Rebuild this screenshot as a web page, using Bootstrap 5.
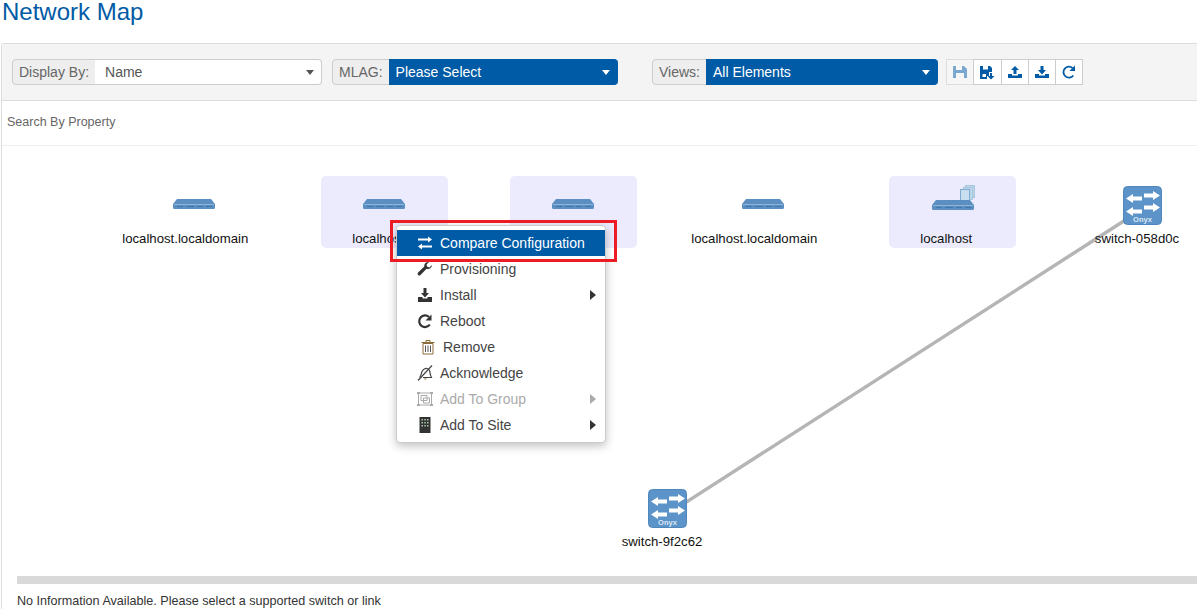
<!DOCTYPE html>
<html lang="en">
<head>
  <meta charset="UTF-8">
  <meta name="viewport" content="width=device-width, initial-scale=1.0">
  <title>Network Map</title>
  <link href="https://cdn.jsdelivr.net/npm/bootstrap@5.3.2/dist/css/bootstrap.min.css" rel="stylesheet">
  <style>
    html, body { height: 615px; overflow: hidden; }
    body { background: #fff; font-family: "Liberation Sans", Arial, sans-serif; font-size: 14px; color: #333; }
    .page-title { font-size: 24px; line-height: 23px; font-weight: 400; color: #005ba6; margin: 0 0 20px 2px; }
    .map-panel { margin-left: 1px; border-left: 1px solid #ddd; border-top: 1px solid #ddd; border-top-left-radius: 3px; }
    .tool-row { height: 57px; background: #f4f4f4; border-bottom: 1px solid #ddd; padding: 15px 0 0 10px; }
    .tool-row .input-group { flex-wrap: nowrap; height: 26px; }
    .tool-row .input-group-text { height: 26px; padding: 0 6px; font-size: 14px; color: #666; background: #eee; border-color: #ccc; border-radius: 4px 0 0 4px; }
    .pick { flex: 1; height: 26px; line-height: 24px; padding: 0 7px; font-size: 14px; position: relative; border: 1px solid #ccc; border-left: 0; border-radius: 0 4px 4px 0; }
    .pick::after { content: ""; position: absolute; right: 7px; top: 10px; border: 4px solid transparent; border-top: 5px solid #555; border-bottom: 0; }
    .pick-blue { background: #005ba6; border-color: #005ba6; color: #fff; }
    .pick-blue::after { border-top-color: #fff; }
    .pick-white { background: #fff; color: #555; padding-left: 10px; }
    .w-display { width: 310px; margin-right: 10px; }
    .w-mlag { width: 286px; margin-right: 34px; }
    .w-views { width: 286px; margin-right: 8px; }
    .tool-btn { width: 28.3px; height: 26px; padding: 0; margin-left: -1px; background: #fff; border: 1px solid #ccc; border-radius: 0; color: #005ba6; display: flex; align-items: center; justify-content: center; }
    .tool-btn:first-child { margin-left: 0; background: #f6f6f6; color: #7ba8d0; border-color: #ddd; }
    .search-row { height: 45px; border-bottom: 1px solid #eee; padding-left: 5px; line-height: 43px; font-size: 12.5px; color: #666; }
    .canvas { position: relative; height: 430px; }
    .node { position: absolute; top: 30px; width: 126.5px; height: 72px; border-radius: 5px; text-align: center; color: #111; font-size: 13.2px; }
    .node svg { position: absolute; left: 41px; top: 22px; }
    .node svg.stack-icon { left: 42px; top: 7px; }
    .node span { position: absolute; left: -26px; right: -14px; top: 54px; line-height: 17px; }
    .node-off span { left: -29px; right: -11px; }
    .node-on { background: #ebebfd; }
    .switch { position: absolute; width: 100px; text-align: center; font-size: 13.2px; line-height: 17px; color: #111; }
    .switch svg { display: block; margin: 0 0 5px 36px; }
    .link-line { position: absolute; left: 0; top: 0; }
    .ctx-box { position: absolute; left: 394px; top: 79px; width: 210px; height: 218px; background: #fff; border: 1px solid #ccc; border-radius: 4px; box-shadow: 0 3px 10px rgba(0,0,0,.25); padding: 4px 0 0; z-index: 2; }
    .ctx-item { height: 26px; line-height: 26px; display: flex; align-items: center; font-size: 14px; color: #444; padding-left: 20px; position: relative; }
    .ctx-item svg { width: 16px; height: 16px; margin-right: 7px; flex: none; }
    .ctx-item.active-item { background: #005ba6; color: #fff; }
    .ctx-item.off { color: #aaa; }
    .ctx-item.item-wide { padding-left: 23px; }
    .ctx-item.has-sub::after { content: ""; position: absolute; right: 9px; top: 8px; border: 5px solid transparent; border-left: 6px solid #333; border-right: 0; }
    .ctx-item.off.has-sub::after { border-left-color: #aaa; }
    .red-mark { position: absolute; left: 388px; top: 74px; width: 227px; height: 42px; border: 3px solid #ed1c24; z-index: 3; pointer-events: none; }
    .split-bar { height: 8px; background: #d9d9d9; margin: 0 0 0 15px; }
    .info-line { padding: 9px 0 0 15px; font-size: 12.6px; line-height: 16px; color: #333; }
  </style>
</head>
<body>
  <svg width="0" height="0" class="position-absolute">
    <defs>
      <symbol id="host" viewBox="0 0 44 12">
        <path d="M5 1h34l4 5v3.500a1.500 1.500 0 0 1-1.500 1.500H2.500A1.500 1.500 0 0 1 1 9.500V6z" fill="#5b8fc2"/>
        <path d="M2 6.500h40" stroke="#8fb4d8" stroke-width="1"/>
        <path d="M5 8.500h6M14 8.500h8M25 8.500h6M34 8.500h6" stroke="#3f78ae" stroke-width="1"/>
      </symbol>
      <symbol id="onyx" viewBox="0 0 39 39">
        <rect x=".5" y=".5" width="38" height="38" rx="4" fill="#5c93c9" stroke="#4f86bc"/>
        <path d="M21 7.500h9V5l7 4.500-7 4.500v-2.500h-9zM19 10.500h-9V8l-7 4.500 7 4.500v-2.500h9zM21 19.500h9V17l7 4.500-7 4.500v-2.500h-9zM19 23.500h-9V21l-7 4.500 7 4.500v-2.500h9z" fill="#fff"/>
      </symbol>
    </defs>
  </svg>

  <h1 class="page-title">Network Map</h1>

  <div class="map-panel">
    <div class="tool-row d-flex align-items-start">
      <div class="input-group w-display">
        <span class="input-group-text">Display By:</span>
        <div class="pick pick-white">Name</div>
      </div>
      <div class="input-group w-mlag">
        <span class="input-group-text">MLAG:</span>
        <div class="pick pick-blue">Please Select</div>
      </div>
      <div class="input-group w-views">
        <span class="input-group-text">Views:</span>
        <div class="pick pick-blue">All Elements</div>
      </div>
      <div class="d-flex">
        <button class="tool-btn" type="button" aria-label="Save">
          <svg width="14" height="14" viewBox="0 0 14 14"><path d="M0 1h11l3 3v9H0z" fill="currentColor"/><path d="M3 1h6v4H3zM3 8h8v5H3z" fill="#f6f6f6"/></svg>
        </button>
        <button class="tool-btn" type="button" aria-label="Save as">
          <svg width="15" height="15" viewBox="0 0 15 15"><path d="M0 1h10l2 2v4H9v4H7v3H0z" fill="currentColor"/><path d="M3 1h5v3.500H3zM2.500 9H6v3H2.500z" fill="#fff"/><path d="M10 8h2v3h2.500L11 14.500 7.500 11H10z" fill="currentColor"/></svg>
        </button>
        <button class="tool-btn" type="button" aria-label="Upload">
          <svg width="14" height="14" viewBox="0 0 14 14"><path d="M7 1l4 4H8.500v4h-3V5H3zM0 9h4v1.500h6V9h4v4H0z" fill="currentColor"/></svg>
        </button>
        <button class="tool-btn" type="button" aria-label="Download">
          <svg width="14" height="14" viewBox="0 0 14 14"><path d="M5.500 1h3v4H11L7 9.500 3 5h2.500zM0 9h4v1.500h6V9h4v4H0z" fill="currentColor"/></svg>
        </button>
        <button class="tool-btn" type="button" aria-label="Refresh">
          <svg width="14" height="14" viewBox="0 0 14 14"><path d="M11.300 10.500A5.500 5.500 0 1 1 10.600 3" fill="none" stroke="currentColor" stroke-width="1.800"/><path d="M13 0.500V6H7.500z" fill="currentColor"/></svg>
        </button>
      </div>
    </div>

    <div class="search-row">Search By Property</div>

    <div class="canvas">
      <svg class="link-line" width="1195" height="430">
        <line x1="1130" y1="69.700" x2="680" y2="358.900" stroke="#b5b5b5" stroke-width="3.500"/>
      </svg>

      <div class="node node-off" style="left:129px"><svg width="44" height="12"><use href="#host"/></svg><span>localhost.localdomain</span></div>
      <div class="node node-on" style="left:319px"><svg width="44" height="12"><use href="#host"/></svg><span>localhost</span></div>
      <div class="node node-on" style="left:508px"><svg width="44" height="12"><use href="#host"/></svg><span>localhost</span></div>
      <div class="node node-off" style="left:698px"><svg width="44" height="12"><use href="#host"/></svg><span>localhost.localdomain</span></div>
      <div class="node node-on" style="left:887px">
        <svg class="stack-icon" width="44" height="30" viewBox="0 0 44 30">
          <rect x="34.500" y="2.500" width="9" height="12" fill="#bcd6ea" stroke="#a9c6df"/>
          <rect x="32.500" y="4.500" width="9" height="12" fill="#bcd6ea" stroke="#a9c6df"/>
          <rect x="29.500" y="6.500" width="9" height="11" fill="#c9dfef" stroke="#7faad2"/>
          <path d="M5 17h34l4 5v3.500a1.500 1.500 0 0 1-1.500 1.500H2.500A1.500 1.500 0 0 1 1 25.500V22z" fill="#5b8fc2"/>
          <path d="M2 22.500h40" stroke="#8fb4d8"/>
          <path d="M5 24.500h6M14 24.500h8M25 24.500h6M34 24.500h6" stroke="#3f78ae"/>
        </svg>
        <span>localhost</span>
      </div>

      <div class="switch" style="left:1085px;top:40px"><svg width="39" height="39"><use href="#onyx"/><text x="19.500" y="36" text-anchor="middle" font-size="7.500" font-weight="700" fill="#dce8f3">Onyx</text></svg>switch-058d0c</div>
      <div class="switch" style="left:610px;top:343px"><svg width="39" height="39"><use href="#onyx"/><text x="19.500" y="36" text-anchor="middle" font-size="7.500" font-weight="700" fill="#dce8f3">Onyx</text></svg>switch-9f2c62</div>

      <div class="red-mark"></div>
      <div class="ctx-box">
        <div class="ctx-item active-item">
          <svg viewBox="0 0 16 16"><path d="M11 1.500l4 3-4 3V5.500H1v-2h10zM5 8.500v2h10v2H5v2l-4-3z" fill="currentColor"/></svg>Compare Configuration
        </div>
        <div class="ctx-item">
          <svg viewBox="0 0 16 16"><path d="M15 4a4 4 0 0 1-5.400 3.800L3.500 14a1.700 1.700 0 0 1-2.400-2.400l6.200-6.100A4 4 0 0 1 12 1L9.500 3.500l.7 2.200 2.200.7z" fill="#333"/></svg>Provisioning
        </div>
        <div class="ctx-item has-sub">
          <svg viewBox="0 0 16 16"><path d="M6.500 1h3v5H12L8 10.500 4 6h2.500zM1 10h4.500v1.500h5V10H15v5H1z" fill="#333"/></svg>Install
        </div>
        <div class="ctx-item">
          <svg viewBox="0 0 16 16"><path d="M12.800 11.500A5.800 5.800 0 1 1 12 4" fill="none" stroke="#333" stroke-width="2.200"/><path d="M14.500 1.500V7.500H8.500z" fill="#333"/></svg>Reboot
        </div>
        <div class="ctx-item item-wide">
          <svg viewBox="0 0 16 16"><path d="M3 4.500h10v10.500H3zM1.500 3.500h13M6 3.500V1.500h4v2" fill="none" stroke="#8a6d3b" stroke-width="1"/><path d="M5.500 6.500v6.500M8 6.500v6.500M10.500 6.500v6.500" stroke="#555" stroke-width="1"/></svg>Remove
        </div>
        <div class="ctx-item">
          <svg viewBox="0 0 16 16"><path d="M2.500 12.500c2-1.500 1.500-4 2.500-6S8.500 3 10 3.500s3 2 3 4c0 2 .5 3 1.500 5H6" fill="none" stroke="#444" stroke-width="1.200"/><path d="M1 15.500L15 .5" stroke="#444" stroke-width="1.200"/><path d="M6.500 13.500a2 2 0 0 0 3.500 0z" fill="#8a6d3b"/></svg>Acknowledge
        </div>
        <div class="ctx-item off has-sub">
          <svg viewBox="0 0 16 16"><path d="M1.500 2h13v12h-13z" fill="none" stroke="#aaa"/><path d="M4 4.500h6v5H4zM6.500 7h6v5h-6z" fill="none" stroke="#aaa"/><path d="M0 1h3v2H0zM13 1h3v2h-3zM0 13h3v2H0zM13 13h3v2h-3z" fill="#aaa"/></svg>Add To Group
        </div>
        <div class="ctx-item has-sub">
          <svg viewBox="0 0 16 16"><path d="M2.500 0h11v16h-11z" fill="#333"/><path d="M4.500 2h1.500v1.500H4.500zM7.300 2h1.500v1.500H7.300zM10 2h1.500v1.500H10zM4.500 5h1.500v1.500H4.500zM7.300 5h1.500v1.500H7.300zM10 5h1.500v1.500H10zM4.500 8h1.500v1.500H4.500zM7.300 8h1.500v1.500H7.300zM10 8h1.500v1.500H10z" fill="#a9c9ac"/></svg>Add To Site
        </div>
      </div>
    </div>

    <div class="split-bar"></div>
    <div class="info-line">No Information Available. Please select a supported switch or link</div>
  </div>

  <script src="https://cdn.jsdelivr.net/npm/bootstrap@5.3.2/dist/js/bootstrap.bundle.min.js"></script>
</body>
</html>
